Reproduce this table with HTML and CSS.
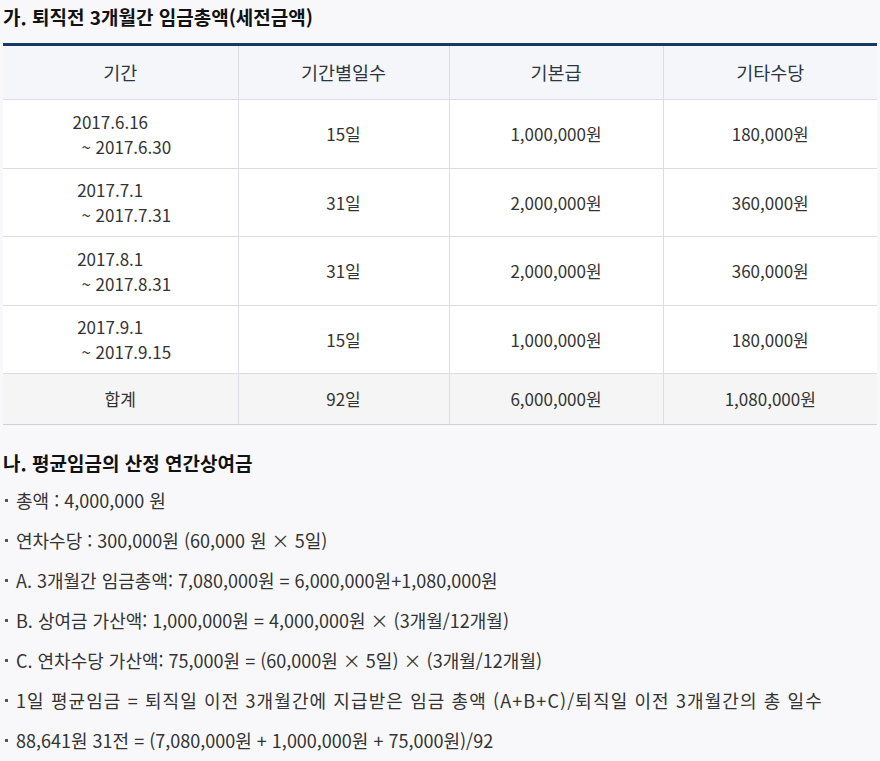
FILE: index.html
```html
<!DOCTYPE html>
<html lang="ko">
<head>
<meta charset="utf-8">
<link rel="stylesheet" href="styles.css">
</head>
<body>
<h3 class="title main">가. 퇴직전 3개월간 임금총액(세전금액)</h3>
<table class="wage">
  <colgroup>
    <col class="c1"><col class="c2"><col class="c3"><col class="c4">
  </colgroup>
  <thead>
    <tr><th>기간</th><th>기간별일수</th><th>기본급</th><th>기타수당</th></tr>
  </thead>
  <tbody>
    <tr><td><span class="d1">2017.6.16</span><br><span class="d2">~ 2017.6.30</span></td><td>15일</td><td>1,000,000원</td><td>180,000원</td></tr>
    <tr><td><span class="d1">2017.7.1</span><br><span class="d2">~ 2017.7.31</span></td><td>31일</td><td>2,000,000원</td><td>360,000원</td></tr>
    <tr><td><span class="d1">2017.8.1</span><br><span class="d2">~ 2017.8.31</span></td><td>31일</td><td>2,000,000원</td><td>360,000원</td></tr>
    <tr><td><span class="d1">2017.9.1</span><br><span class="d2">~ 2017.9.15</span></td><td>15일</td><td>1,000,000원</td><td>180,000원</td></tr>
    <tr class="total"><td>합계</td><td>92일</td><td>6,000,000원</td><td>1,080,000원</td></tr>
  </tbody>
</table>
<h3 class="title sub">나. 평균임금의 산정 연간상여금</h3>
<ul class="calc">
  <li>총액 : 4,000,000 원</li>
  <li>연차수당 : 300,000원 (60,000 원 × 5일)</li>
  <li>A. 3개월간 임금총액: 7,080,000원 = 6,000,000원+1,080,000원</li>
  <li>B. 상여금 가산액: 1,000,000원 = 4,000,000원 × (3개월/12개월)</li>
  <li>C. 연차수당 가산액: 75,000원 = (60,000원 × 5일) × (3개월/12개월)</li>
  <li class="ko">1일 평균임금 = 퇴직일 이전 3개월간에 지급받은 임금 총액 (A+B+C)/퇴직일 이전 3개월간의 총 일수</li>
  <li>88,641원 31전 = (7,080,000원 + 1,000,000원 + 75,000원)/92</li>
</ul>
</body>
</html>
```
FILE: styles.css
```css
html, body {
  margin: 0;
  padding: 0;
  background: #f8f8fa;
}
body {
  padding: 0 3px;
  font-family: "Noto Sans CJK KR", "Noto Sans", sans-serif;
  color: #333;
  font-size: 16px;
}
.title {
  margin: 0;
  height: 43px;
  line-height: 34px;
  font-size: 19px;
  font-weight: bold;
  color: #111;
}
.title.sub {
  margin-top: 23px;
  height: auto;
  line-height: 30px;
}
.wage {
  width: 874px;
  border-collapse: collapse;
  table-layout: fixed;
  border-top: 3px solid #163a63;
}
.c1 { width: 235px; }
.c2 { width: 211px; }
.c3 { width: 214px; }
.c4 { width: 214px; }
.wage th, .wage td {
  text-align: center;
  vertical-align: middle;
  border-left: 1px solid #dcdce2;
  border-bottom: 1px solid #dcdce2;
  padding: 9px 0;
  line-height: 25px;
  font-weight: normal;
  font-size: 17px;
}
.wage th:first-child, .wage td:first-child {
  border-left: none;
}
.wage th {
  background: #f4f6fa;
  color: #2f3640;
  height: 35px;
  font-size: 18.5px;
}
.wage td {
  background: #fff;
  padding: 8.75px 0;
}
.wage .total td {
  background: #f5f5f5;
  padding: 12px 0 13px;
  border-bottom: 1px solid #cfcfd4;
}
.d1 { padding-right: 20px; }
.d2 { padding-left: 12px; }
.calc {
  list-style: none;
  margin: 10px 0 0;
  padding: 0;
  font-size: 18px;
}
.calc li {
  position: relative;
  padding-left: 13px;
  line-height: 24px;
  margin-bottom: 16px;
}
.calc li.ko {
  letter-spacing: 1.1px;
}
.calc li::before {
  content: "";
  position: absolute;
  left: 2px;
  top: 11px;
  width: 3px;
  height: 3px;
  background: #555;
}
```
